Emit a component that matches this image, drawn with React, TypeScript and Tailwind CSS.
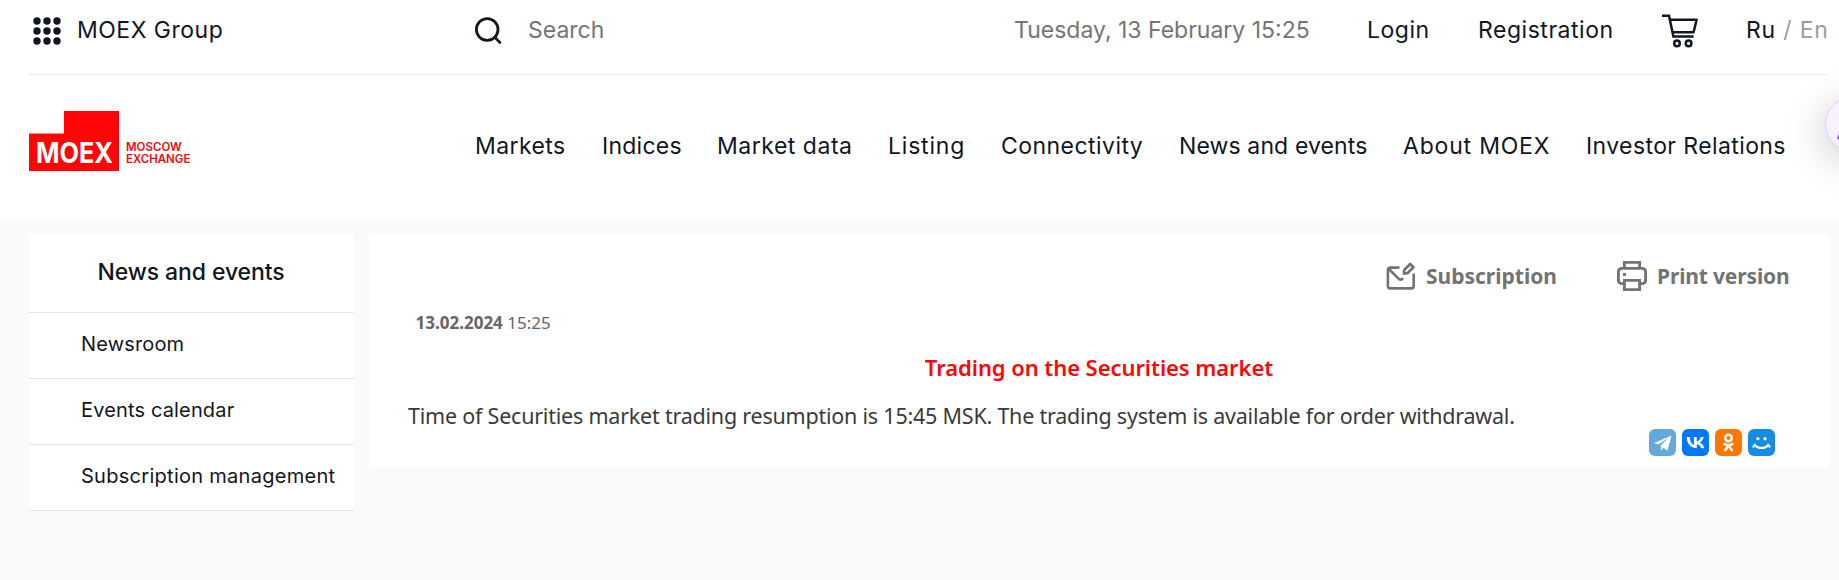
const navItems = [
  { label: "Markets", width: "w-[127px]", tracking: "tracking-[0.4px]" },
  { label: "Indices", width: "w-[115px]", tracking: "tracking-[0.25px]" },
  { label: "Market data", width: "w-[171px]", tracking: "tracking-[0.52px]" },
  { label: "Listing", width: "w-[113px]", tracking: "tracking-[0.8px]" },
  { label: "Connectivity", width: "w-[178px]", tracking: "tracking-[0.45px]" },
  { label: "News and events", width: "w-[224px]", tracking: "tracking-[0.12px]" },
  { label: "About MOEX", width: "w-[183px]", tracking: "tracking-[0.8px]" },
  { label: "Investor Relations", width: "w-[210px]", tracking: "tracking-[0.4px]" },
];

const sideItems = [
  { label: "Newsroom", tracking: "tracking-[0.15px]" },
  { label: "Events calendar", tracking: "tracking-[0.15px]" },
  { label: "Subscription management", tracking: "tracking-[0.28px]" },
];

function GridIcon() {
  return (
    <svg className="mt-px h-7 w-7" viewBox="0 0 28 28" fill="#12161f">
      {[4, 14, 24].map((y) =>
        [4, 14, 24].map((x) => <circle key={`${x}-${y}`} cx={x} cy={y} r="3.7" />)
      )}
    </svg>
  );
}

function SearchIcon() {
  return (
    <svg className="mt-px h-[27px] w-[27px]" viewBox="0 0 27 27" fill="none" stroke="#12161f" strokeWidth="2.8">
      <circle cx="12.2" cy="12.5" r="10.8" />
      <path d="M19.8 20.2 24.8 25.4" strokeLinecap="round" />
    </svg>
  );
}

function CartIcon() {
  return (
    <svg className="mt-px h-9 w-9" viewBox="0 0 36 36" fill="none" stroke="#12161f" strokeWidth="2.5">
      <path d="M0 2.8h7l4.4 20.8h20.2" />
      <path d="M8 6.8h26.6l-3 12.4H10.8" strokeLinejoin="round" />
      <circle cx="15" cy="30.4" r="2.8" />
      <circle cx="26.6" cy="30.4" r="2.8" />
    </svg>
  );
}

function MailEditIcon() {
  return (
    <svg className="h-[30px] w-[30px]" viewBox="0 0 30 30" fill="none" stroke="#737373" strokeWidth="2.6" strokeLinecap="round" strokeLinejoin="round">
      <path d="M12.5 6.6H4.3c-1.4 0-2.4 1-2.4 2.4v16c0 1.4 1 2.4 2.4 2.4h21c1.4 0 2.4-1 2.4-2.4V13.5" />
      <path d="M2.9 8 12 17.2c1.6 1.7 3.2 1.7 4.4.6" />
      <path d="m18 12.6.2-3.6 6-6 3.2 3.2-6 6Z" strokeWidth="2.7" />
    </svg>
  );
}

function PrinterIcon() {
  return (
    <svg className="h-[30px] w-[30px]" viewBox="0 0 30 30" fill="none" stroke="#737373" strokeWidth="2.9">
      <path d="M7.4 7.4v-6h15.2v6" />
      <path d="M7.4 22.6H4.8c-1.9 0-3.4-1.5-3.4-3.4v-8.4c0-1.9 1.5-3.4 3.4-3.4h20.4c1.9 0 3.4 1.5 3.4 3.4v8.4c0 1.9-1.5 3.4-3.4 3.4h-2.6" />
      <path d="M7.4 19.4h15.2v9.2H7.4Z" />
      <path d="M6 13.5h3" />
    </svg>
  );
}

function ShareButtons() {
  return (
    <div className="flex gap-1.5">
      <svg className="h-[27px] w-[27px] rounded-md bg-[#64a9dc]" viewBox="0 0 27 27" fill="#fff">
        <path d="M22.4 6.8 4.8 14l4.6 1.6 10-6.6-7.6 7.6v5l2.6-2.8 4 3Z" />
      </svg>
      <svg className="h-[27px] w-[27px] rounded-md bg-[#0077ff]" viewBox="0 0 24 24" fill="#fff">
        <path d="M12.9 17C7.5 17 4.3 13.3 4.2 7.2h2.7c.1 4.5 2.1 6.4 3.7 6.8V7.2h2.5v3.9c1.6-.2 3.2-2 3.7-3.9h2.5c-.4 2.4-2.1 4.1-3.4 4.8 1.3.6 3.2 2.1 4 5h-2.8c-.6-1.9-2.1-3.3-4-3.5V17Z" />
      </svg>
      <svg className="h-[27px] w-[27px] rounded-md bg-[#ff7700]" viewBox="0 0 27 27" fill="none" stroke="#fff" strokeWidth="2.4">
        <circle cx="13.5" cy="9" r="3.3" />
        <path d="M8.6 14.6c3 2 6.8 2 9.8 0M13.5 16.6l-3.9 5.4M13.5 16.6l3.9 5.4" />
      </svg>
      <svg className="h-[27px] w-[27px] rounded-md bg-[#168de2]" viewBox="0 0 27 27" fill="#fff">
        <circle cx="9.9" cy="9.7" r="1.6" />
        <circle cx="17" cy="9.7" r="1.6" />
        <path d="M6.6 16c3.5 4 10.3 4 13.8 0M4.9 18.4 7.4 15M22.1 18.4 19.6 15" fill="none" stroke="#fff" strokeWidth="2" />
      </svg>
    </div>
  );
}

function Logo() {
  return (
    <div className="flex h-[60px] items-end">
      <svg className="h-[60px] w-[90px] overflow-visible" viewBox="0 0 90 60">
        <path d="M35 0h55v60H0V22.5h35Z" fill="#ff0508" />
        <text x="7" y="51.5" textLength="77" lengthAdjust="spacingAndGlyphs" fill="#fff" className="font-['Inter',sans-serif] text-[28.5px] font-bold">MOEX</text>
      </svg>
      <div className="ml-[7px] pb-[6px] font-['Inter',sans-serif] text-[11.5px] leading-3 font-semibold text-[#ff0508]">
        <div>MOSCOW</div>
        <div>EXCHANGE</div>
      </div>
    </div>
  );
}

export default function App() {
  return (
    <div className="relative h-[580px] w-[1839px] overflow-hidden bg-[#fafafa] font-['Inter',sans-serif] text-[#12161f]">
      <header className="h-[219px] bg-white pr-[10px] pl-[29px]">
        {/* Top bar */}
        <div className="flex h-[75px] items-start border-b border-[#ececec] text-[23px] leading-[60px] whitespace-nowrap">
          <div className="flex w-[446px] items-center pl-1">
            <GridIcon />
            <span className="ml-4 tracking-[0.5px]">MOEX Group</span>
          </div>
          <div className="flex w-[539px] items-center">
            <SearchIcon />
            <span className="ml-[26px] text-[#757575]">Search</span>
          </div>
          <div className="w-[353px] text-[#757575]">Tuesday, 13 February 15:25</div>
          <div className="w-[111px] tracking-[0.5px]">Login</div>
          <div className="w-[184px] tracking-[0.53px]">Registration</div>
          <div className="flex h-[60px] w-[84px] items-center">
            <CartIcon />
          </div>
          <div className="tracking-[0.8px] text-[#9a9da2]">
            <span className="text-[#12161f]">Ru</span> / En
          </div>
        </div>

        {/* Main navigation */}
        <div className="flex h-[144px]">
          <div className="w-[446px] pt-9">
            <Logo />
          </div>
          <nav className="flex text-[23px] leading-[142px] whitespace-nowrap">
            {navItems.map((item) => (
              <a key={item.label} className={`${item.width} ${item.tracking}`}>{item.label}</a>
            ))}
          </nav>
        </div>
      </header>

      <main className="flex items-start gap-[15px] pt-[15px] pl-[29px]">
        <aside className="w-[325px] bg-white">
          <h2 className="h-[79px] border-b border-[#e4e4e4] pl-[68.5px] text-[23px] leading-[76px] font-medium tracking-[-0.1px]">
            News and events
          </h2>
          {sideItems.map((item) => (
            <a
              key={item.label}
              className={`block h-[66px] border-b border-[#e4e4e4] pl-[52px] text-[20px] leading-[62px] whitespace-nowrap ${item.tracking}`}
            >
              {item.label}
            </a>
          ))}
        </aside>

        <section className="h-[234px] w-[1460px] bg-white font-['Noto_Sans',sans-serif]">
          <div className="flex h-[66px] items-end justify-end pr-10 pb-[2px] text-[21px] font-bold whitespace-nowrap text-[#737373]">
            <div className="flex items-center gap-[10px] leading-[44px]">
              <MailEditIcon />
              <span className="w-[191px]">Subscription</span>
            </div>
            <div className="flex items-center gap-[10px] leading-[44px]">
              <PrinterIcon />
              <span className="w-[132px] tracking-[-0.15px]">Print version</span>
            </div>
          </div>
          <div className="h-[45px] pl-[46.5px] text-[17px] leading-[46px] text-[#666]">
            <b>13.02.2024</b> <span>15:25</span>
          </div>
          <h1 className="text-center text-[22px] leading-[44px] font-semibold tracking-[-0.07px] text-[#ff0508]">
            Trading on the Securities market
          </h1>
          <p className="h-10 pl-[39px] text-[21.5px] leading-[54px] tracking-[-0.22px] whitespace-nowrap text-[#3a3a3a]">
            Time of Securities market trading resumption is 15:45 MSK. The trading system is available for order withdrawal.
          </p>
          <div className="flex justify-end pr-[54px]">
            <ShareButtons />
          </div>
        </section>
      </main>

      {/* Floating assistant bubble, partly off the right edge */}
      <div className="absolute top-[96px] left-[1825px] h-14 w-14 rounded-full border border-[#e3ccff] bg-[#f8f1ff] shadow-[0_8px_40px_rgba(0,0,0,0.22)]">
        <svg className="mt-[34px] ml-[10.5px] h-2 w-4" viewBox="0 0 16 8" fill="#8b35f5">
          <path d="M0 8 3 0h10l3 8Z" />
        </svg>
      </div>
    </div>
  );
}
